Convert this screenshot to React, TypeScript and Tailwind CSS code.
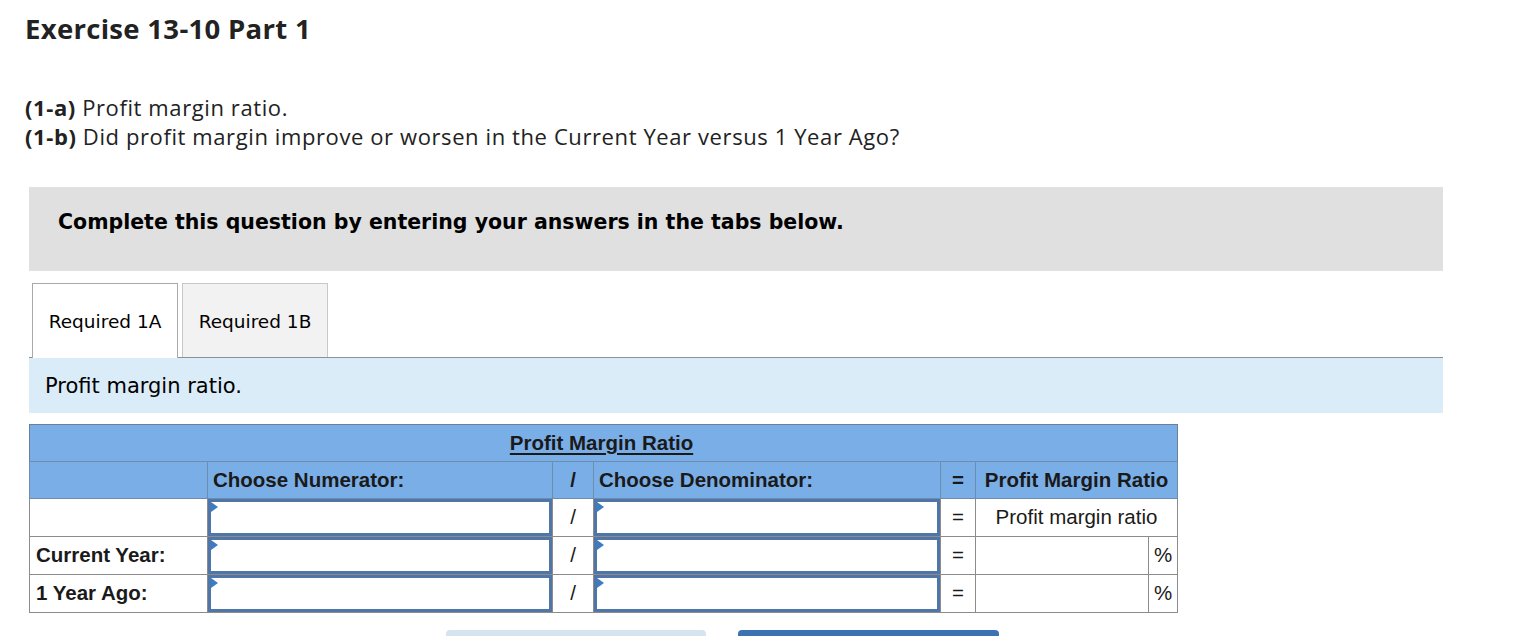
import React from 'react';

const Triangle: React.FC = () => (
    <span className="absolute left-0 top-0 w-0 h-0 border-y-[5px] border-y-transparent border-l-[7px] border-l-[#3c7cc4]" />
);

const InputCell: React.FC = () => (
    <td className="p-0 border border-[#8c8c8c] h-[38px]">
        <div className="relative h-full w-full border-[3px] border-[#4f76a6] bg-white">
            <Triangle />
        </div>
    </td>
);

const rows = [
    { label: '', result: 'text' },
    { label: 'Current Year:', result: 'pct' },
    { label: '1 Year Ago:', result: 'pct' },
];

export default function App() {
    return (
        <div className="bg-white w-[1528px] h-[636px] overflow-hidden text-[#222]">
            <div className="pl-[25px] pt-[11px] font-['Open_Sans',sans-serif]">
                <h1 className="text-[27.5px] font-bold leading-[36px] tracking-[0.3px] text-[#222]">Exercise 13-10 Part 1</h1>
                <div className="mt-[46px] text-[22px] leading-[29px] tracking-[0.6px]">
                    <p><span className="font-bold">(1-a)</span> Profit margin ratio.</p>
                    <p><span className="font-bold">(1-b)</span> Did profit margin improve or worsen in the Current Year versus 1 Year Ago?</p>
                </div>
            </div>

            <div className="ml-[29px] w-[1414px] font-['DejaVu_Sans',Verdana,sans-serif]">
                <div className="mt-[36px] h-[84px] bg-[#e0e0e0] pl-[29px] pt-[21px]">
                    <span className="text-[20.5px] font-bold text-black leading-[28px]">Complete this question by entering your answers in the tabs below.</span>
                </div>

                <div className="mt-[12px] flex items-end gap-[4px] pl-[3px] border-b border-[#8a9199] h-[75px]">
                    <div className="h-[75px] w-[146px] bg-white border border-b-0 border-[#a9a9a9] flex items-center justify-center text-[18.5px] text-black -mb-px pt-[2px]">
                        Required 1A
                    </div>
                    <div className="h-[74px] w-[146px] bg-[#f2f2f2] border border-b-0 border-[#c8c8c8] flex items-center justify-center text-[18.5px] text-black pt-[2px]">
                        Required 1B
                    </div>
                </div>

                <div className="h-[55px] bg-[#dbecf9] flex items-center pl-[16px] pt-[3px] text-[21px] text-black">
                    Profit margin ratio.
                </div>
            </div>

            <table className="ml-[29px] mt-[11px] border-collapse table-fixed w-[1148px] font-['Liberation_Sans',Arial,sans-serif] text-[20.5px] text-[#1a1a1a] border border-[#6a7f99]">
                <colgroup>
                    <col className="w-[178px]" />
                    <col className="w-[345px]" />
                    <col className="w-[41px]" />
                    <col className="w-[347px]" />
                    <col className="w-[35px]" />
                    <col className="w-[173px]" />
                    <col className="w-[29px]" />
                </colgroup>
                <thead>
                    <tr className="bg-[#7aaee6] h-[37px]">
                        <th colSpan={7} className="font-bold text-center border-b border-[#6d8cae] p-0">
                            <span className="underline underline-offset-[3px] pr-[4px]">Profit Margin Ratio</span>
                        </th>
                    </tr>
                    <tr className="bg-[#7aaee6] h-[37px] font-bold">
                        <th className="border border-[#6d8cae]" />
                        <th className="border border-[#6d8cae] text-left pl-[5px] font-bold">Choose Numerator:</th>
                        <th className="border border-[#6d8cae] text-center font-bold">/</th>
                        <th className="border border-[#6d8cae] text-left pl-[5px] font-bold">Choose Denominator:</th>
                        <th className="border border-[#6d8cae] text-center font-bold">=</th>
                        <th colSpan={2} className="border border-[#6d8cae] text-center font-bold">Profit Margin Ratio</th>
                    </tr>
                </thead>
                <tbody>
                    {rows.map((r, i) => (
                        <tr key={i} className="bg-white">
                            <td className="border border-[#8c8c8c] pl-[6px] font-bold h-[38px]">{r.label}</td>
                            <InputCell />
                            <td className="border border-[#8c8c8c] text-center">/</td>
                            <InputCell />
                            <td className="border border-[#8c8c8c] text-center">=</td>
                            {r.result === 'text' ? (
                                <td colSpan={2} className="border border-[#8c8c8c] text-center">Profit margin ratio</td>
                            ) : (
                                <>
                                    <td className="border border-[#8c8c8c]" />
                                    <td className="border border-[#8c8c8c] text-center">%</td>
                                </>
                            )}
                        </tr>
                    ))}
                </tbody>
            </table>

            <div className="flex mt-[17px] pl-[446px] gap-[32px]">
                <div className="w-[260px] h-[20px] bg-[#d6e3f0] rounded-t-[4px]" />
                <div className="w-[261px] h-[20px] bg-[#3a72b3] rounded-t-[4px]" />
            </div>
        </div>
    );
}
